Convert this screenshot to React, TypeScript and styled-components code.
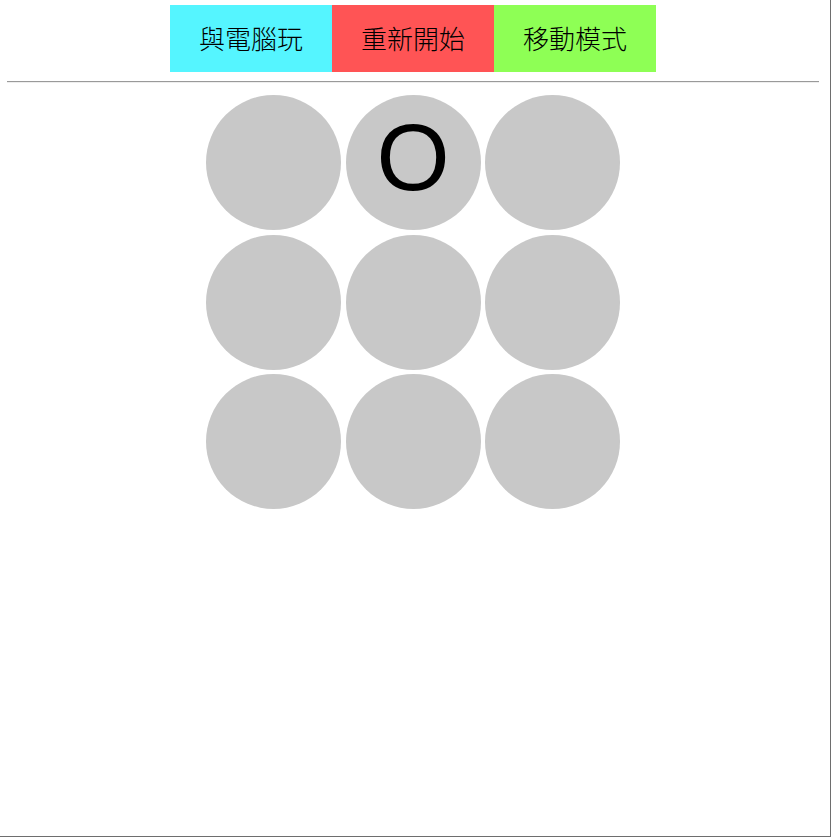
import React, { useState } from "react";
import styled, { createGlobalStyle } from "styled-components";

const GlobalStyle = createGlobalStyle`
  html, body { margin: 0; padding: 0; background: #ffffff; }
  body { font-family: "Liberation Sans", "Noto Sans CJK TC", sans-serif; }
`;

const Frame = styled.div`
  box-sizing: border-box;
  width: 831px;
  height: 837px;
  padding: 5px 11px 0 7px;
  border-right: 1px solid #6e6e6e;
  border-bottom: 1px solid #6e6e6e;
  display: flex;
  flex-direction: column;
`;

const Toolbar = styled.div`
  display: flex;
  justify-content: center;
`;

const ToolButton = styled.button<{ $bg: string }>`
  width: 162px;
  height: 67px;
  border: none;
  margin: 0;
  padding: 0 0 2px;
  background: ${(p) => p.$bg};
  color: #000;
  font-family: "Noto Sans CJK TC", "Noto Sans CJK SC", sans-serif;
  font-size: 26px;
  font-weight: 300;
  cursor: pointer;
  display: flex;
  align-items: center;
  justify-content: center;
`;

const Divider = styled.hr`
  margin: 9px 0 0;
  height: 0;
  border: none;
  border-top: 1px solid #9a9a9a;
  border-bottom: 1px solid #eeeeee;
`;

const Board = styled.div`
  margin-top: 12px;
  display: grid;
  grid-template-columns: repeat(3, 135px);
  grid-auto-rows: 135px;
  gap: 4.5px;
  justify-content: center;
`;

const Cell = styled.div`
  border-radius: 50%;
  background: #c8c8c8;
  display: flex;
  align-items: center;
  justify-content: center;
  font-family: "Liberation Sans", Arial, sans-serif;
  font-size: 94px;
  line-height: 1;
  color: #000;
  padding-bottom: 10px;
  box-sizing: border-box;
  user-select: none;
`;

export default function App() {
  const [cells] = useState<string[]>(["", "O", "", "", "", "", "", "", ""]);
  return (
    <>
      <GlobalStyle />
      <Frame>
        <Toolbar>
          <ToolButton $bg="#55f5ff">與電腦玩</ToolButton>
          <ToolButton $bg="#ff5455">重新開始</ToolButton>
          <ToolButton $bg="#8eff55">移動模式</ToolButton>
        </Toolbar>
        <Divider />
        <Board>
          {cells.map((c, i) => (
            <Cell key={i}>{c}</Cell>
          ))}
        </Board>
      </Frame>
    </>
  );
}
